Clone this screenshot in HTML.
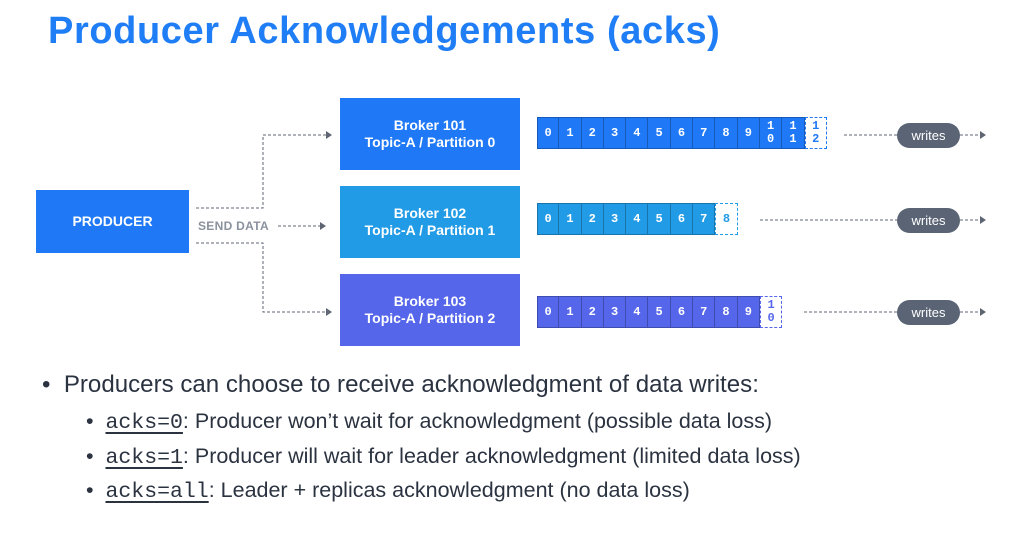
<!DOCTYPE html>
<html><head><meta charset="utf-8"><style>
*{margin:0;padding:0;box-sizing:border-box}
body{width:1023px;height:545px;background:#fff;position:relative;overflow:hidden;font-family:"Liberation Sans",sans-serif}
.a{position:absolute}
h1{position:absolute;left:48px;top:10px;font-size:38px;font-weight:bold;color:#1f7ef5;letter-spacing:0.6px;white-space:nowrap}
.box{position:absolute;color:#fff;font-weight:bold;font-size:14px;text-align:center;display:flex;align-items:center;justify-content:center;line-height:17px}
.row{position:absolute;display:flex;height:32px}
.c{width:22.3px;height:32px;border:1px solid rgba(0,0,0,.25);border-left:none;color:#fff;font-family:"Liberation Mono",monospace;font-size:12px;font-weight:bold;display:flex;align-items:center;justify-content:center;text-align:center;line-height:13px}
.c:first-child{border-left:1px solid rgba(0,0,0,.25)}
.d{background:#fff;border:1.5px dashed}
.pill{position:absolute;width:63px;height:25px;border-radius:13px;background:#5a6474;color:#fff;font-size:13px;display:flex;align-items:center;justify-content:center}
.txt{position:absolute;color:#2b3341;white-space:nowrap}
code{font-family:"Liberation Mono",monospace;text-decoration:underline;text-underline-offset:4px;text-decoration-thickness:2px}
</style></head><body>
<h1>Producer Acknowledgements (acks)</h1>
<div class="box" style="left:36px;top:190px;width:153px;height:63px;background:#1f78f5">PRODUCER</div>
<div class="box" style="left:340px;top:98px;width:180px;height:72px;background:#1f78f5">Broker 101<br>Topic-A / Partition 0</div>
<div class="box" style="left:340px;top:186px;width:180px;height:72px;background:#229be6">Broker 102<br>Topic-A / Partition 1</div>
<div class="box" style="left:340px;top:274px;width:180px;height:72px;background:#5566ea">Broker 103<br>Topic-A / Partition 2</div>
<div class="a" style="left:198px;top:219px;font-size:12px;color:#8a929e;font-weight:bold;letter-spacing:.3px">SEND DATA</div>
<svg class="a" style="left:0;top:0" width="1023" height="545">
<g stroke="#5f6673" stroke-width="1" stroke-dasharray="3,2" fill="none">
<path d="M196 208H263V135H326"/><path d="M278 226H320"/><path d="M196 243H263V312H326"/>
<path d="M844 135H897M960 135H980"/><path d="M760 220H897M960 220H980"/><path d="M804 312H897M960 312H980"/>
</g>
<g fill="#5f6673"><path d="M326 131l6 4-6 4z"/><path d="M320 222l6 4-6 4z"/><path d="M326 308l6 4-6 4z"/>
<path d="M980 131l6 4-6 4z"/><path d="M980 216l6 4-6 4z"/><path d="M980 308l6 4-6 4z"/></g>
</svg>
<div class="row" style="left:537px;top:117px;background:none">
<div class="c" style="background:#1f78f5">0</div><div class="c" style="background:#1f78f5">1</div><div class="c" style="background:#1f78f5">2</div><div class="c" style="background:#1f78f5">3</div><div class="c" style="background:#1f78f5">4</div><div class="c" style="background:#1f78f5">5</div><div class="c" style="background:#1f78f5">6</div><div class="c" style="background:#1f78f5">7</div><div class="c" style="background:#1f78f5">8</div><div class="c" style="background:#1f78f5">9</div><div class="c" style="background:#1f78f5">1<br>0</div><div class="c" style="background:#1f78f5">1<br>1</div><div class="c d" style="color:#1f78f5;border-color:#1f78f5">1<br>2</div>
</div>
<div class="row" style="left:537px;top:203px">
<div class="c" style="background:#229be6">0</div><div class="c" style="background:#229be6">1</div><div class="c" style="background:#229be6">2</div><div class="c" style="background:#229be6">3</div><div class="c" style="background:#229be6">4</div><div class="c" style="background:#229be6">5</div><div class="c" style="background:#229be6">6</div><div class="c" style="background:#229be6">7</div><div class="c d" style="color:#229be6;border-color:#229be6">8</div>
</div>
<div class="row" style="left:537px;top:296px">
<div class="c" style="background:#5566ea">0</div><div class="c" style="background:#5566ea">1</div><div class="c" style="background:#5566ea">2</div><div class="c" style="background:#5566ea">3</div><div class="c" style="background:#5566ea">4</div><div class="c" style="background:#5566ea">5</div><div class="c" style="background:#5566ea">6</div><div class="c" style="background:#5566ea">7</div><div class="c" style="background:#5566ea">8</div><div class="c" style="background:#5566ea">9</div><div class="c d" style="color:#5566ea;border-color:#5566ea">1<br>0</div>
</div>
<div class="pill" style="left:897px;top:123px">writes</div>
<div class="pill" style="left:897px;top:208px">writes</div>
<div class="pill" style="left:897px;top:300px">writes</div>
<div class="txt" style="left:42px;top:371px;font-size:24.1px">•&nbsp;&nbsp;Producers can choose to receive acknowledgment of data writes:</div>
<div class="txt" style="left:86px;top:409px;font-size:21.5px">•&nbsp;&nbsp;<code>acks=0</code>: Producer won’t wait for acknowledgment (possible data loss)</div>
<div class="txt" style="left:86px;top:444px;font-size:21.5px">•&nbsp;&nbsp;<code>acks=1</code>: Producer will wait for leader acknowledgment (limited data loss)</div>
<div class="txt" style="left:86px;top:478px;font-size:21.5px">•&nbsp;&nbsp;<code>acks=all</code>: Leader + replicas acknowledgment (no data loss)</div>
</body></html>
